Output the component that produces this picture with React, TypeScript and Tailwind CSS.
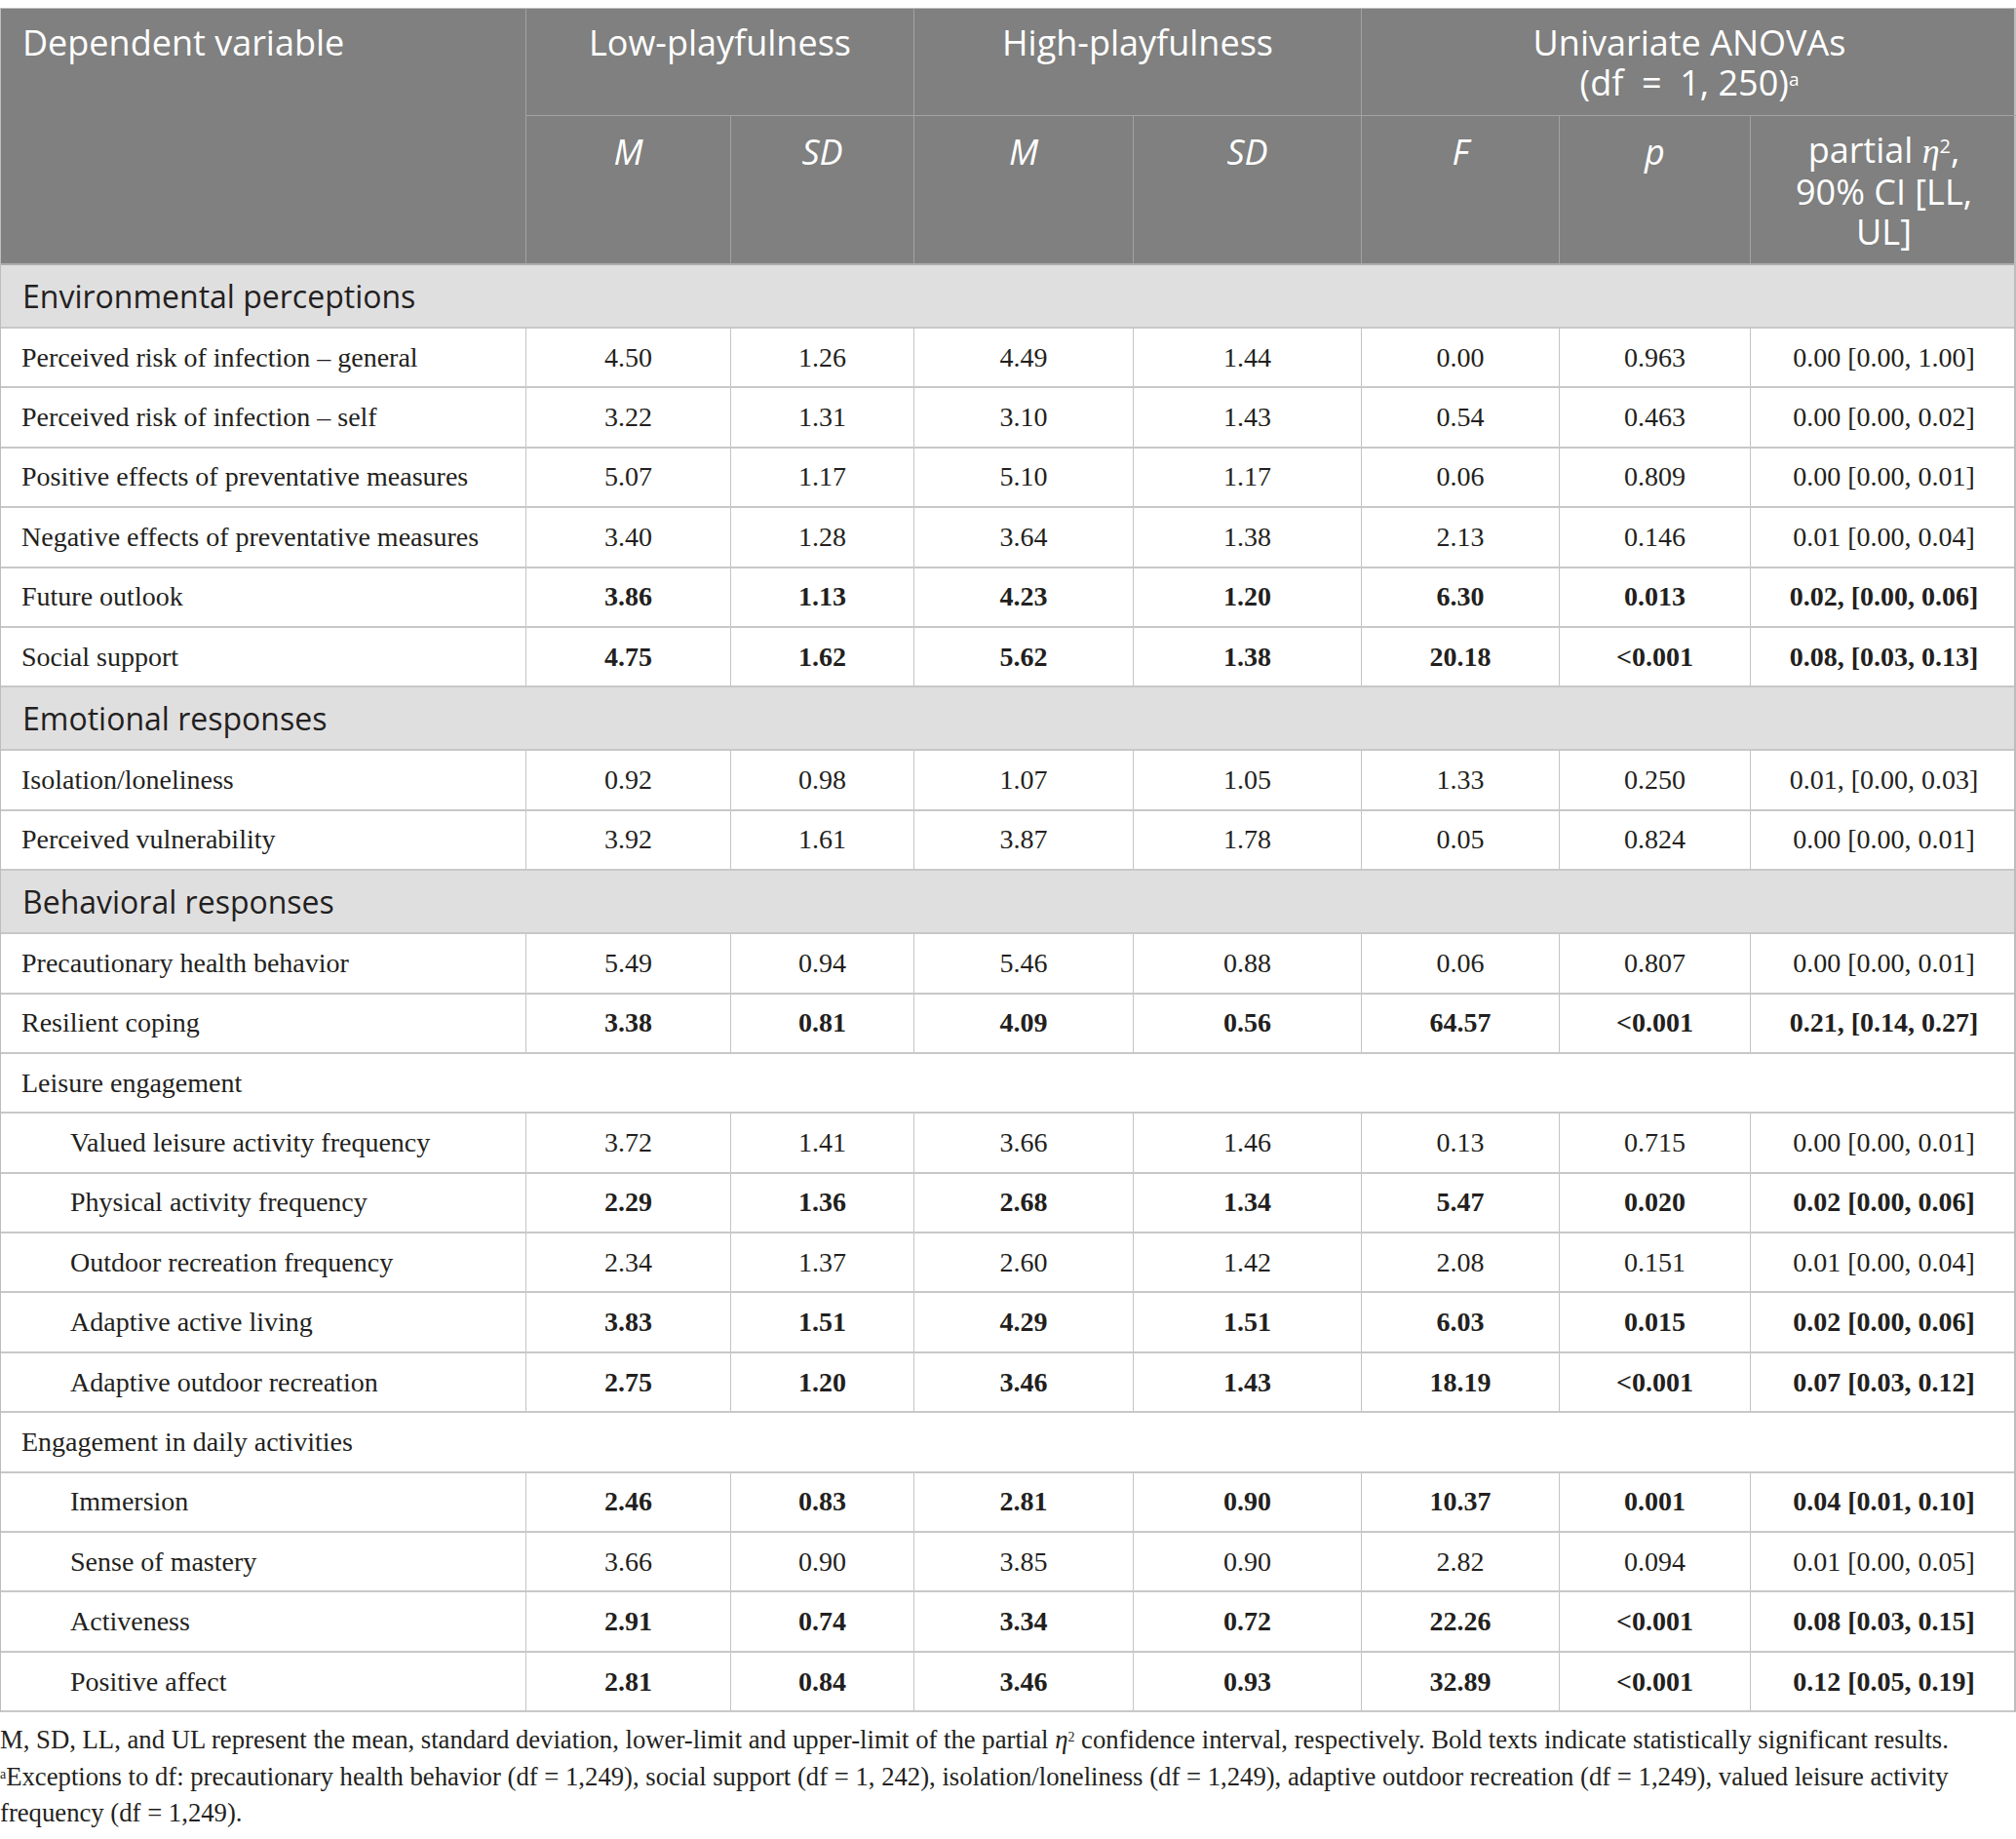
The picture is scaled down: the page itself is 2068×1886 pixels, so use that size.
import React from 'react';

type Row =
  | { kind: 'section'; label: string }
  | { kind: 'group'; label: string }
  | { kind: 'data'; label: string; vals: string[]; bold?: boolean; indent?: boolean };

const cols = 'grid grid-cols-[538px_210px_188px_225px_234px_203px_196px_274px]';
const serif = "font-['Liberation_Serif','Times_New_Roman',serif]";
const sans = "font-['Open_Sans','Noto_Sans',sans-serif]";

const rows: Row[] = [
  { kind: 'section', label: 'Environmental perceptions' },
  { kind: 'data', label: 'Perceived risk of infection – general', vals: ['4.50', '1.26', '4.49', '1.44', '0.00', '0.963', '0.00 [0.00, 1.00]'] },
  { kind: 'data', label: 'Perceived risk of infection – self', vals: ['3.22', '1.31', '3.10', '1.43', '0.54', '0.463', '0.00 [0.00, 0.02]'] },
  { kind: 'data', label: 'Positive effects of preventative measures', vals: ['5.07', '1.17', '5.10', '1.17', '0.06', '0.809', '0.00 [0.00, 0.01]'] },
  { kind: 'data', label: 'Negative effects of preventative measures', vals: ['3.40', '1.28', '3.64', '1.38', '2.13', '0.146', '0.01 [0.00, 0.04]'] },
  { kind: 'data', label: 'Future outlook', bold: true, vals: ['3.86', '1.13', '4.23', '1.20', '6.30', '0.013', '0.02, [0.00, 0.06]'] },
  { kind: 'data', label: 'Social support', bold: true, vals: ['4.75', '1.62', '5.62', '1.38', '20.18', '<0.001', '0.08, [0.03, 0.13]'] },
  { kind: 'section', label: 'Emotional responses' },
  { kind: 'data', label: 'Isolation/loneliness', vals: ['0.92', '0.98', '1.07', '1.05', '1.33', '0.250', '0.01, [0.00, 0.03]'] },
  { kind: 'data', label: 'Perceived vulnerability', vals: ['3.92', '1.61', '3.87', '1.78', '0.05', '0.824', '0.00 [0.00, 0.01]'] },
  { kind: 'section', label: 'Behavioral responses' },
  { kind: 'data', label: 'Precautionary health behavior', vals: ['5.49', '0.94', '5.46', '0.88', '0.06', '0.807', '0.00 [0.00, 0.01]'] },
  { kind: 'data', label: 'Resilient coping', bold: true, vals: ['3.38', '0.81', '4.09', '0.56', '64.57', '<0.001', '0.21, [0.14, 0.27]'] },
  { kind: 'group', label: 'Leisure engagement' },
  { kind: 'data', label: 'Valued leisure activity frequency', indent: true, vals: ['3.72', '1.41', '3.66', '1.46', '0.13', '0.715', '0.00 [0.00, 0.01]'] },
  { kind: 'data', label: 'Physical activity frequency', indent: true, bold: true, vals: ['2.29', '1.36', '2.68', '1.34', '5.47', '0.020', '0.02 [0.00, 0.06]'] },
  { kind: 'data', label: 'Outdoor recreation frequency', indent: true, vals: ['2.34', '1.37', '2.60', '1.42', '2.08', '0.151', '0.01 [0.00, 0.04]'] },
  { kind: 'data', label: 'Adaptive active living', indent: true, bold: true, vals: ['3.83', '1.51', '4.29', '1.51', '6.03', '0.015', '0.02 [0.00, 0.06]'] },
  { kind: 'data', label: 'Adaptive outdoor recreation', indent: true, bold: true, vals: ['2.75', '1.20', '3.46', '1.43', '18.19', '<0.001', '0.07 [0.03, 0.12]'] },
  { kind: 'group', label: 'Engagement in daily activities' },
  { kind: 'data', label: 'Immersion', indent: true, bold: true, vals: ['2.46', '0.83', '2.81', '0.90', '10.37', '0.001', '0.04 [0.01, 0.10]'] },
  { kind: 'data', label: 'Sense of mastery', indent: true, vals: ['3.66', '0.90', '3.85', '0.90', '2.82', '0.094', '0.01 [0.00, 0.05]'] },
  { kind: 'data', label: 'Activeness', indent: true, bold: true, vals: ['2.91', '0.74', '3.34', '0.72', '22.26', '<0.001', '0.08 [0.03, 0.15]'] },
  { kind: 'data', label: 'Positive affect', indent: true, bold: true, vals: ['2.81', '0.84', '3.46', '0.93', '32.89', '<0.001', '0.12 [0.05, 0.19]'] },
];

function HeaderCell({ children, className = '' }: { children: React.ReactNode; className?: string }) {
  return (
    <div className={`text-center text-white text-[36px] leading-[41px] border-l border-[#a3a3a3] ${className}`}>
      {children}
    </div>
  );
}

function TableRow({ row }: { row: Row }) {
  if (row.kind === 'section') {
    return (
      <div className={`h-[65px] flex items-center pl-[22px] bg-[#e0dfe0] border-b-2 border-[#c8c8c8] ${sans} text-[32px] text-[#231f20]`}>
        {row.label}
      </div>
    );
  }
  if (row.kind === 'group') {
    return (
      <div className={`h-[61.4px] flex items-center pl-[21px] border-b-2 border-[#c8c8c8] ${serif} text-[28px] text-[#231f20]`}>
        {row.label}
      </div>
    );
  }
  return (
    <div className={`${cols} h-[61.4px] border-b-2 border-[#c8c8c8] ${serif} text-[28px] text-[#231f20]`}>
      <div className={`flex items-center ${row.indent ? 'pl-[71px]' : 'pl-[21px]'}`}>{row.label}</div>
      {row.vals.map((v, i) => (
        <div key={i} className={`flex items-center justify-center border-l border-[#c4c4c4] ${row.bold ? 'font-bold' : ''}`}>
          {v}
        </div>
      ))}
    </div>
  );
}

export default function App() {
  return (
    <div className="w-[2068px] bg-white pt-2 pb-6">
      <div className="border-t border-l border-r-2 border-[#bdbdbd]">
        {/* Header */}
        <div className={`${cols} grid-rows-[109px_152px] bg-[#7f807f] border-b-2 border-[#acacac] ${sans}`}>
          <div className="row-span-2 pl-[22px] pt-[14px] text-white text-[36px] leading-[41px]">Dependent variable</div>
          <HeaderCell className="col-span-2 pt-[14px]">Low-playfulness</HeaderCell>
          <HeaderCell className="col-span-2 pt-[14px]">High-playfulness</HeaderCell>
          <HeaderCell className="col-span-3 pt-[14px]">
            Univariate ANOVAs
            <br />
            (df&nbsp; = &nbsp;1, 250)<sup className="text-[19px] leading-none top-[-10px]">a</sup>
          </HeaderCell>
          <HeaderCell className="border-t border-[#a3a3a3] pt-[16px] italic">M</HeaderCell>
          <HeaderCell className="border-t border-[#a3a3a3] pt-[16px] italic">SD</HeaderCell>
          <HeaderCell className="border-t border-[#a3a3a3] pt-[16px] italic">M</HeaderCell>
          <HeaderCell className="border-t border-[#a3a3a3] pt-[16px] italic">SD</HeaderCell>
          <HeaderCell className="border-t border-[#a3a3a3] pt-[16px] italic">F</HeaderCell>
          <HeaderCell className="border-t border-[#a3a3a3] pt-[16px] italic">p</HeaderCell>
          <HeaderCell className="border-t border-[#a3a3a3] pt-[14px] leading-[39px]">
            partial <span className={`${serif} italic`}>η</span>
            <sup className="text-[20px] leading-none">2</sup>,
            <br />
            90% CI [LL,
            <br />
            UL]
          </HeaderCell>
        </div>

        {rows.map((r, i) => (
          <TableRow key={i} row={r} />
        ))}
      </div>

      {/* Notes */}
      <div className={`mt-[10px] ${serif} text-[26.7px] leading-[37.5px] text-[#231f20]`}>
        <p>
          M, SD, LL, and UL represent the mean, standard deviation, lower-limit and upper-limit of the partial <span className="italic">η</span>
          <sup className="text-[14px] leading-none">2</sup> confidence interval, respectively. Bold texts indicate statistically significant results.
        </p>
        <p className="pr-[40px]">
          <sup className="text-[14px] leading-none">a</sup>Exceptions to df: precautionary health behavior (df = 1,249), social support (df = 1, 242), isolation/loneliness (df = 1,249), adaptive outdoor recreation (df = 1,249), valued leisure activity frequency (df = 1,249).
        </p>
      </div>
    </div>
  );
}
